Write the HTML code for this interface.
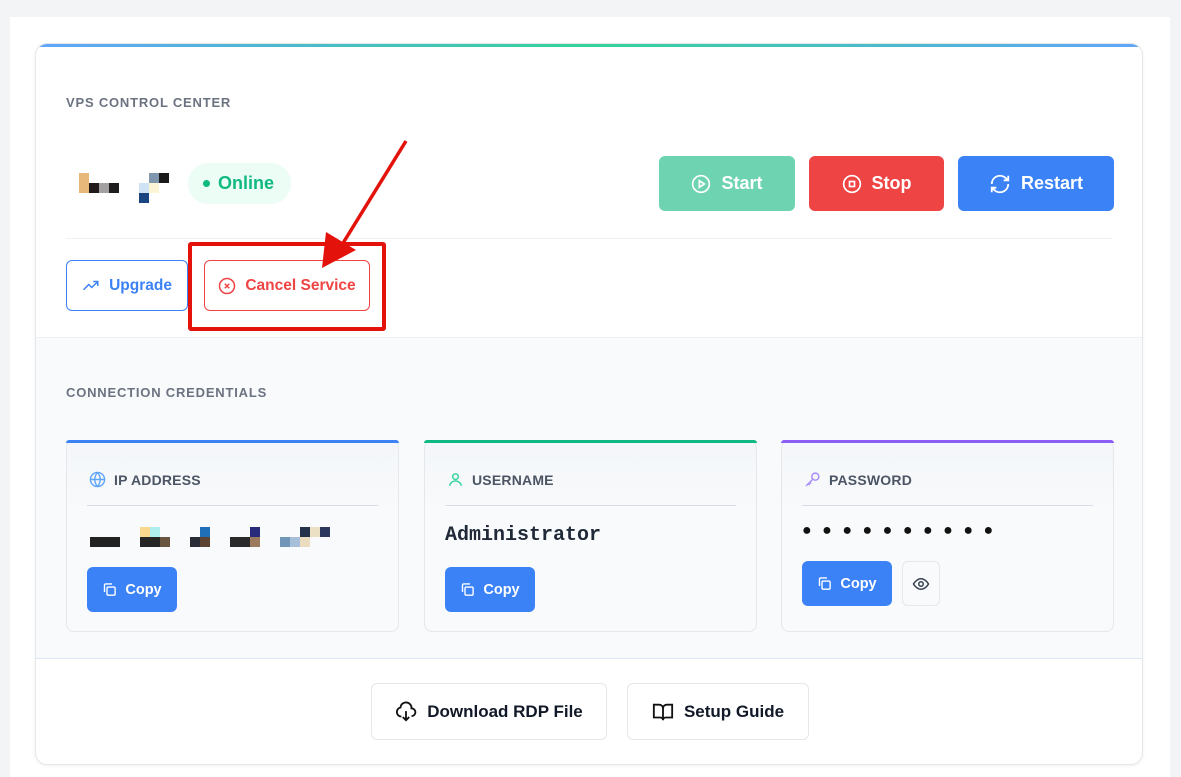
<!DOCTYPE html>
<html><head><style>
*{box-sizing:border-box;margin:0;padding:0}
body{width:1181px;height:771px;background:#f3f4f6;font-family:"Liberation Sans",sans-serif;position:relative;overflow:hidden}
.wrap{position:absolute;left:10px;top:17px;width:1160px;height:760px;background:#fff}
.card{position:absolute;left:35px;top:43px;width:1108px;height:722px;border:1px solid #e5e7eb;border-radius:12px;background:#fff;overflow:hidden;box-shadow:0 1px 3px rgba(0,0,0,.06)}
.card:before{content:"";position:absolute;left:0;top:0;right:0;height:3px;background:linear-gradient(90deg,#60a5fa,#34d399,#60a5fa)}
.lbl{position:absolute;font-size:13px;letter-spacing:.8px;color:#6b7280;font-weight:bold}
.btn{position:absolute;border-radius:6px;color:#fff;font-weight:bold;font-size:18px;display:flex;align-items:center;justify-content:center;gap:10px}
.px{position:absolute;width:10px;height:10px}
.cred{position:absolute;top:396px;width:333px;height:192px;border:1px solid #e5e7eb;border-radius:8px;background:linear-gradient(#f3f6fa,#f9fafb 40%)}
.cred .bar{position:absolute;left:-1px;right:-1px;top:-1px;height:3px;border-radius:8px 8px 0 0}
.cred .t{position:absolute;left:47px;top:31px;font-size:14px;font-weight:bold;color:#4b5563;letter-spacing:.2px}
.cred .hr{position:absolute;left:20px;right:20px;top:64px;height:1px;background:#d6dde8}
.copy{position:absolute;left:20px;width:90px;height:45px;background:#3b82f6;border-radius:6px;color:#fff;font-weight:bold;font-size:14.5px;display:flex;align-items:center;justify-content:center;gap:8px}
.ob{position:absolute;top:639px;height:57px;border:1px solid #e5e7eb;border-radius:6px;background:#fff;font-weight:bold;font-size:17px;color:#111827;display:flex;align-items:center;justify-content:center;gap:10px}
</style></head><body>
<div class="wrap"></div>
<div class="card">
<div class="lbl" style="left:30px;top:51px">VPS CONTROL CENTER</div>
<div class="px" style="left:43px;top:129px;background:#e8b77a;height:20px"></div>
<div class="px" style="left:53px;top:139px;background:#221a1a"></div>
<div class="px" style="left:63px;top:139px;background:#a3a0a2"></div>
<div class="px" style="left:73px;top:139px;background:#1e1e1e"></div>
<div class="px" style="left:113px;top:129px;background:#7e97ad"></div>
<div class="px" style="left:123px;top:129px;background:#1b1b1b"></div>
<div class="px" style="left:103px;top:139px;background:#cfe3f4"></div>
<div class="px" style="left:113px;top:139px;background:#fbf5d6"></div>
<div class="px" style="left:103px;top:149px;background:#1b4580"></div>
<div style="position:absolute;left:152px;top:119px;width:103px;height:41px;border-radius:20px;background:#ecfdf5;color:#10b981;font-weight:bold;font-size:18px;display:flex;align-items:center;padding-left:15px;gap:8px"><span style="width:7px;height:7px;border-radius:50%;background:#10b981"></span>Online</div>
<div class="btn" style="left:623px;top:112px;width:136px;height:55px;background:#6ed3b0"><svg width="20" height="20" viewBox="0 0 24 24" fill="none" stroke="#fff" stroke-width="2"><circle cx="12" cy="12" r="10"/><path d="M10 8l6 4-6 4z"/></svg>Start</div>
<div class="btn" style="left:773px;top:112px;width:135px;height:55px;background:#ef4444"><svg width="20" height="20" viewBox="0 0 24 24" fill="none" stroke="#fff" stroke-width="2"><circle cx="12" cy="12" r="10"/><rect x="9" y="9" width="6" height="6"/></svg>Stop</div>
<div class="btn" style="left:922px;top:112px;width:156px;height:55px;background:#3b82f6"><svg width="22" height="22" viewBox="0 0 24 24" fill="none" stroke="#fff" stroke-width="2"><path d="M3 12a9 9 0 0 1 15-6.7L21 8M21 3v5h-5M21 12a9 9 0 0 1-15 6.7L3 16M3 21v-5h5"/></svg>Restart</div>
<div style="position:absolute;left:30px;right:30px;top:194px;height:1px;background:#eef0f3"></div>
<div style="position:absolute;left:30px;top:216px;width:122px;height:51px;border:1px solid #3b82f6;border-radius:6px;color:#3b82f6;font-weight:bold;font-size:15.5px;display:flex;align-items:center;justify-content:center;gap:9px"><svg width="18" height="18" viewBox="0 0 24 24" fill="none" stroke="#3b82f6" stroke-width="2"><path d="M2 17l7-7 4 4 8-8M15 6h6v6"/></svg>Upgrade</div>
<div style="position:absolute;left:168px;top:216px;width:166px;height:51px;border:1px solid #ef4444;border-radius:6px;color:#ef4444;font-weight:bold;font-size:15.5px;display:flex;align-items:center;justify-content:center;gap:9px"><svg width="18" height="18" viewBox="0 0 24 24" fill="none" stroke="#ef4444" stroke-width="2"><circle cx="12" cy="12" r="10"/><path d="M9 9l6 6M15 9l-6 6"/></svg>Cancel Service</div>
<div style="position:absolute;left:0;right:0;top:293px;height:322px;background:#f8fafc;border-top:1px solid #eef0f3;border-bottom:1px solid #dbe7f5"></div>
<div class="lbl" style="left:30px;top:341px">CONNECTION CREDENTIALS</div>
<div class="cred" style="left:30px"><div class="bar" style="background:#3b82f6"></div>
<svg style="position:absolute;left:22px;top:30px" width="17" height="17" viewBox="0 0 24 24" fill="none" stroke="#60a5fa" stroke-width="2"><circle cx="12" cy="12" r="10"/><path d="M2 12h20M12 2a15 15 0 0 1 0 20M12 2a15 15 0 0 0 0 20"/></svg>
<div class="t">IP ADDRESS</div><div class="hr"></div>
<div style="position:absolute;left:23px;top:96px;width:30px;height:10px;background:#222"></div>
<div style="position:absolute;left:73px;top:86px;width:20px;height:10px;background:linear-gradient(90deg,#f7d88e 50%,#aeeeee 50%)"></div>
<div style="position:absolute;left:73px;top:96px;width:30px;height:10px;background:linear-gradient(90deg,#252525 66%,#6a5640 66%)"></div>
<div style="position:absolute;left:133px;top:86px;width:10px;height:10px;background:#1f6fb8"></div>
<div style="position:absolute;left:123px;top:96px;width:20px;height:10px;background:linear-gradient(90deg,#2a2c36 50%,#5d4331 50%)"></div>
<div style="position:absolute;left:183px;top:86px;width:10px;height:10px;background:#272b7a"></div>
<div style="position:absolute;left:163px;top:96px;width:30px;height:10px;background:linear-gradient(90deg,#2a2a2a 66%,#9c7a5e 66%)"></div>
<div style="position:absolute;left:233px;top:86px;width:30px;height:10px;background:linear-gradient(90deg,#26324a 33%,#ebe0c4 33%,#ebe0c4 66%,#2b375c 66%)"></div>
<div style="position:absolute;left:213px;top:96px;width:30px;height:10px;background:linear-gradient(90deg,#7296b8 33%,#a8bfd9 33%,#a8bfd9 66%,#ecdcbf 66%)"></div>
<div class="copy" style="top:126px"><svg width="15" height="15" viewBox="0 0 24 24" fill="none" stroke="#fff" stroke-width="2.2"><rect x="8" y="8" width="13" height="13" rx="2"/><path d="M4 16V5a2 2 0 0 1 2-2h10"/></svg>Copy</div></div>
<div class="cred" style="left:388px"><div class="bar" style="background:#10b981"></div>
<svg style="position:absolute;left:22px;top:30px" width="17" height="17" viewBox="0 0 24 24" fill="none" stroke="#34d399" stroke-width="2"><circle cx="12" cy="8" r="4"/><path d="M4 21c0-4 4-7 8-7s8 3 8 7"/></svg>
<div class="t">USERNAME</div><div class="hr"></div>
<div style="position:absolute;left:20px;top:83px;font-family:'Liberation Mono',monospace;font-weight:bold;font-size:20px;color:#1f2937">Administrator</div>
<div class="copy" style="top:126px"><svg width="15" height="15" viewBox="0 0 24 24" fill="none" stroke="#fff" stroke-width="2.2"><rect x="8" y="8" width="13" height="13" rx="2"/><path d="M4 16V5a2 2 0 0 1 2-2h10"/></svg>Copy</div></div>
<div class="cred" style="left:745px"><div class="bar" style="background:#8b5cf6"></div>
<svg style="position:absolute;left:22px;top:30px" width="17" height="17" viewBox="0 0 24 24" fill="none" stroke="#a78bfa" stroke-width="2"><circle cx="16" cy="8" r="5"/><path d="M12.5 11.5L3 21M6 18l2 2M8 16l2 2"/></svg>
<div class="t">PASSWORD</div><div class="hr"></div>
<div style="position:absolute;left:20px;top:81px;font-size:16px;letter-spacing:10.5px;color:#111">●●●●●●●●●●</div>
<div class="copy" style="top:120px"><svg width="15" height="15" viewBox="0 0 24 24" fill="none" stroke="#fff" stroke-width="2.2"><rect x="8" y="8" width="13" height="13" rx="2"/><path d="M4 16V5a2 2 0 0 1 2-2h10"/></svg>Copy</div>
<div style="position:absolute;left:120px;top:120px;width:38px;height:45px;border:1px solid #e5e7eb;border-radius:6px;background:#f9fafb;display:flex;align-items:center;justify-content:center"><svg width="18" height="18" viewBox="0 0 24 24" fill="none" stroke="#374151" stroke-width="2"><path d="M2 12s4-7 10-7 10 7 10 7-4 7-10 7S2 12 2 12z"/><circle cx="12" cy="12" r="3"/></svg></div></div>
<div class="ob" style="left:335px;width:236px"><svg width="22" height="22" viewBox="0 0 24 24" fill="none" stroke="#111" stroke-width="2"><path d="M7 17a5 5 0 0 1-1-9.9A6 6 0 0 1 18 8a4 4 0 0 1 0 8.5M12 11v10M8.5 17.5L12 21l3.5-3.5"/></svg>Download RDP File</div>
<div class="ob" style="left:591px;width:182px"><svg width="22" height="22" viewBox="0 0 24 24" fill="none" stroke="#111" stroke-width="2"><path d="M2 4h6a4 4 0 0 1 4 4v13a3 3 0 0 0-3-3H2zM22 4h-6a4 4 0 0 0-4 4v13a3 3 0 0 1 3-3h7z"/></svg>Setup Guide</div>
</div>
<div style="position:absolute;left:188px;top:242px;width:198px;height:89px;border:4px solid #e3120b;border-radius:3px"></div>
<svg style="position:absolute;left:0;top:0" width="1181" height="771"><path d="M406 141L340 248" stroke="#e3120b" stroke-width="3.5"/><path d="M322 268L326 232L356 250Z" fill="#e3120b"/></svg>
</body></html>
